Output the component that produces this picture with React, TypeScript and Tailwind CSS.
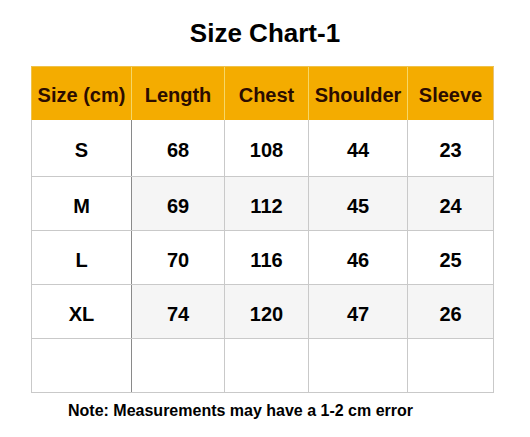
const headers = ["Size (cm)", "Length", "Chest", "Shoulder", "Sleeve"];

const rows = [
  ["S", "68", "108", "44", "23"],
  ["M", "69", "112", "45", "24"],
  ["L", "70", "116", "46", "25"],
  ["XL", "74", "120", "47", "26"],
  ["", "", "", "", ""],
];

const widths = ["w-[101px]", "w-[93px]", "w-[84px]", "w-[99px]", "w-[86px]"];

export default function App() {
  return (
    <div className="w-[530px] h-[437px] bg-white font-['Liberation_Sans',Arial,sans-serif] font-bold text-black">
      <h1 className="pt-[18px] h-[66px] text-center text-[26px] leading-[30px] font-bold">
        Size Chart-1
      </h1>
      <div className="ml-[31px] w-[463px] flex flex-col">
        <div className="flex h-[54px] bg-[#f4ac00] text-[#2b0c00] border-t border-[#efc24a]">
          {headers.map((h, i) => (
            <div
              key={h}
              className={`${widths[i]} shrink-0 pt-[3px] flex items-center justify-center text-[20px] border-r ${
                i === 0 ? "border-l border-l-[#efc24a]" : ""
              } border-[#f6d766] last:border-r-[#e6c27a]`}
            >
              {h}
            </div>
          ))}
        </div>
        {rows.map((row, r) => (
          <div
            key={r}
            className={`flex ${r === 0 ? "h-[57px]" : "h-[54px]"} border-b border-[#c9c9c9]`}
          >
            {row.map((cell, i) => (
              <div
                key={i}
                className={`${widths[i]} shrink-0 pt-[4px] flex items-center justify-center text-[20px] ${
                  i === 0
                    ? "border-l border-l-[#c9c9c9] border-r border-r-[#8a8a8a] bg-white"
                    : "border-r border-r-[#c9c9c9]"
                } ${i > 0 && (r === 1 || r === 3) ? "bg-[#f5f5f5]" : ""}`}
              >
                {cell}
              </div>
            ))}
          </div>
        ))}
      </div>
      <p className="mt-[9px] ml-[68px] text-[16px] leading-[18px]">
        Note: Measurements may have a 1-2 cm error
      </p>
    </div>
  );
}
